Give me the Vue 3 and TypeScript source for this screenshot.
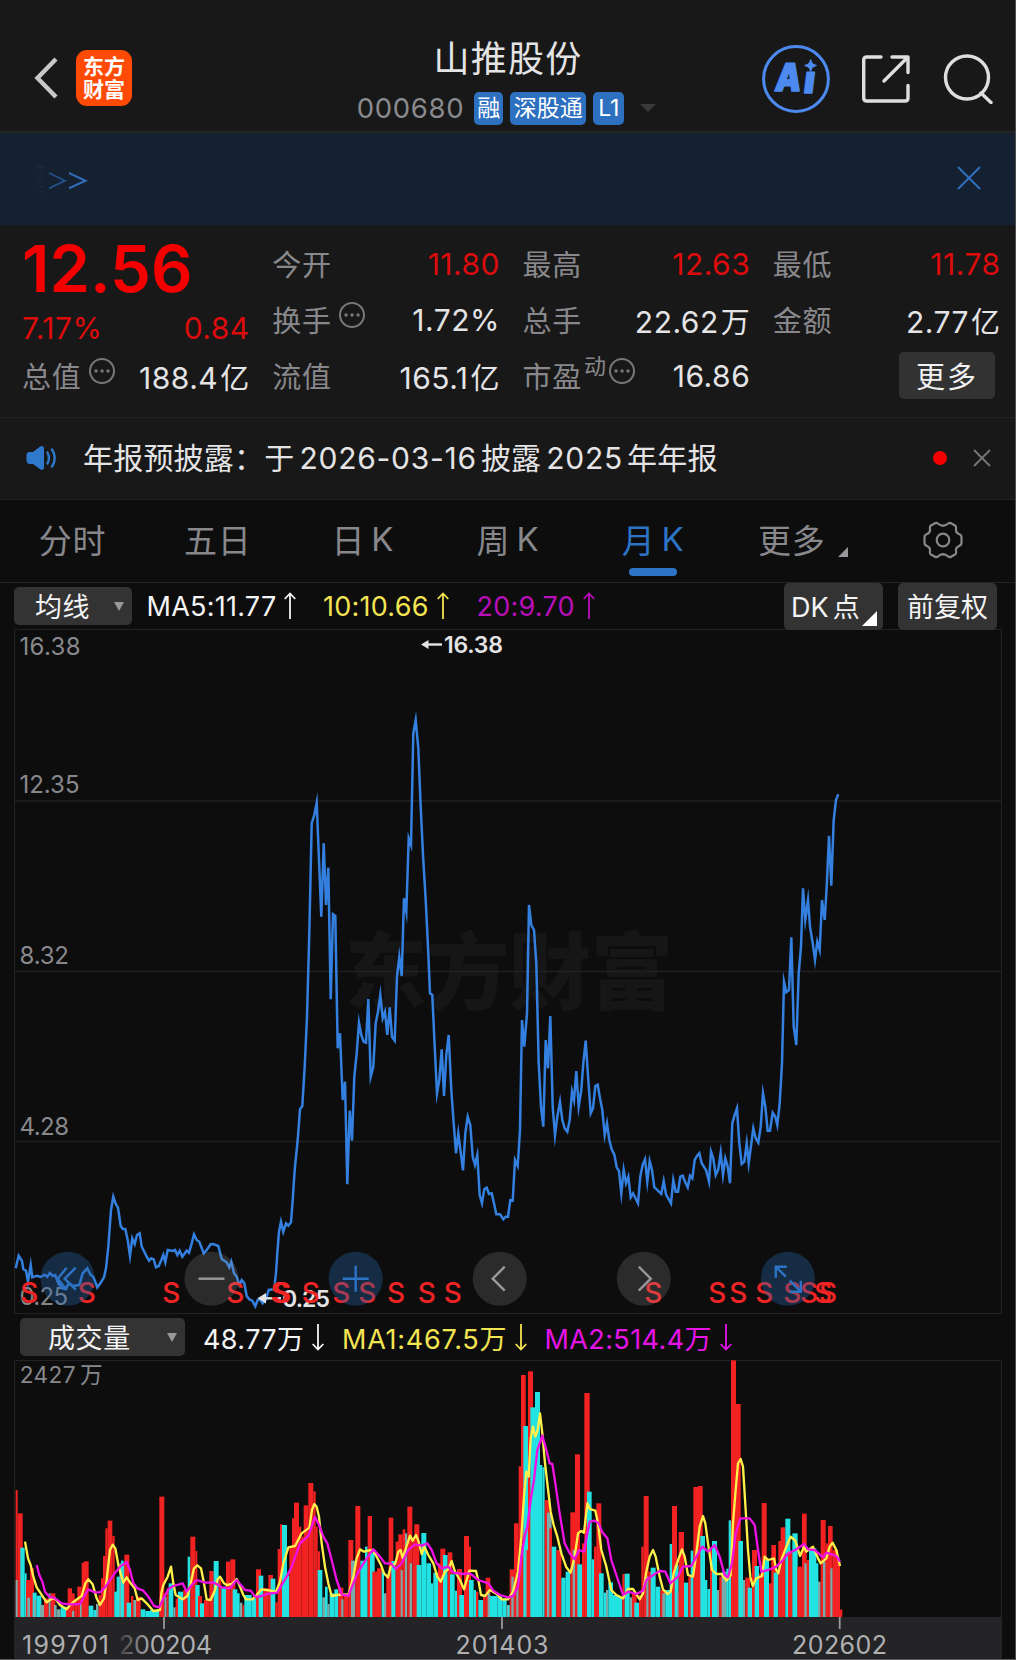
<script setup lang="ts">
type Kind = 'r' | 'c' | 'm'
interface Bar { x: number; w: number; y: number; kind: Kind }

const tabs = ['分时', '五日', '日K', '周K', '月K', '更多']
const activeTab = '月K'

const gridLines = [801, 971.5, 1141.5]
const priceLabels = [
  { text: '16.38', x: 19.5, y: 655.3, w: 61 },
  { text: '12.35', x: 19.5, y: 793, w: 60 },
  { text: '8.32', x: 19.5, y: 964, w: 49.5 },
  { text: '4.28', x: 19.5, y: 1134.5, w: 49.5 },
  { text: '0.25', x: 19.5, y: 1305.3, w: 48.5 },
]

const price =
  '15.7,1268.3 18.7,1255.7 22,1261 23.3,1269.3 26,1270.7 28,1281.7 30.7,1265 32.3,1277.3 36.7,1275.7 40.7,1277 44.7,1274.7 47.3,1276.7 50,1273 52.7,1276 55.3,1275 58.3,1283.3 62.3,1288.3 65.7,1289 68.7,1283.3 73.3,1286 79.3,1285 82.7,1273.3 87.3,1268.3 90.7,1275 93.3,1276.7 97.3,1287.3 100.7,1282.7 104,1277.3 106,1268.3 108.3,1246.7 111,1210 113.3,1196.7 115.7,1204 118,1207.7 120.7,1226 122.7,1229 125.3,1229 127.7,1240 130,1256 132.3,1238.3 134.7,1244 137,1235 139.7,1233.3 141.7,1246.7 144.3,1251.7 146.7,1256.7 149,1260.7 151.3,1258.3 153.7,1259.3 156,1267.3 158.7,1266 161.3,1260 163.3,1255 165.3,1262.3 167.7,1250 172.7,1251 175,1250 177.3,1255 179.7,1250.7 182.3,1256.7 186.7,1250.7 189,1252.7 191.7,1243.3 194,1234.3 196.7,1240 199.3,1241.7 203.7,1253.3 206.7,1250 210.7,1244.3 213.3,1244 218.3,1246 221.7,1259 226.7,1262.3 229.3,1267.3 231.3,1261.7 234,1273.3 236.7,1276.7 239.3,1285 241.7,1280 244.3,1283.3 246.7,1296 249.3,1299.3 252.3,1300.7 255.3,1306.3 257.7,1300 260,1299.3 262.7,1303.3 265.7,1300 268.7,1290 274,1289.3 276,1273.3 277.3,1253.3 279,1231.7 281,1221.7 283.3,1231.7 286,1223.3 288.3,1225.7 291,1222.3 292.7,1200 294,1180 ' +
  '295,1166.7 297.7,1140 300,1109.3 302.3,1106 304.7,1066.7 307,1016.7 309.3,933.3 311.7,823.3 314.3,815 316.7,802.7 319,860 321.3,916.7 323.7,843.3 326,905 328.3,867.7 330.7,999.3 333,914.3 335.3,916 337.7,1048.3 340,1033.3 342.7,1100 345,1081.7 347.3,1184.3 349.7,1110.7 352,1140.7 354.3,1076.7 356.7,1053.3 359,1022.7 361.3,1035 363.7,1041.7 366,1042.7 368.3,999 370.7,1076.7 373.3,1066.7 375.7,1023.3 378,1011.7 380.3,995 382.7,1018.3 385,1011.7 387.3,1035 389.7,1007.3 392,1036.7 394.7,1040.7 397,976.7 399.3,956.7 401.7,976 404,898.3 406.3,911.7 408.7,838.3 411,845 413.3,733.3 415.7,720 418.3,748.3 420.7,806.7 423,855 425.7,900 428,946.7 430,993.3 432.3,995 434.7,1046.7 437,1093.3 439.3,1080 441.7,1049.3 444,1096 446.3,1055 448.7,1035 451.3,1090 453.7,1123.3 456,1153.3 458.3,1133.3 463,1170.3 465.3,1133.3 467.7,1116.7 470.3,1125 472.7,1156.7 475,1165 477.3,1155 ' +
  '479.7,1195 482,1203.3 484.3,1189.3 486.7,1187.7 489,1194 491.7,1193.3 494,1203.3 496.3,1214.3 500,1214.3 503.3,1219.3 505.7,1216.7 508,1216.7 510.3,1200 512.7,1200.7 515,1160 517.7,1166 520,1130 522,1020 524.3,1046.7 527,1013.3 529,905 531.3,925 534,930 536.3,963.3 538.7,1063.3 541,1106.7 543.3,1126.7 545.7,1040 548,1068.3 550.3,1016 552.7,1106.7 555,1135.3 557.3,1116.7 560,1101.7 562.3,1120 564.7,1128.3 567.3,1131.7 569.7,1120 572,1091.7 574,1100 576.3,1071 578.7,1106.7 581.3,1090 583.3,1063.3 585.7,1040.7 588.3,1080 590.7,1113.3 593,1108.3 595.3,1086 597.7,1084.7 600,1098.3 602.3,1110 604.7,1135 607,1123.3 609.3,1140 611.7,1149.3 614.3,1154.3 616.7,1167.3 619,1171 621.3,1193.3 623.7,1170 626,1183.3 628.3,1176.7 630.7,1197.3 633,1193.3 638,1203.3 640.3,1176.7 642.7,1164.3 645,1159.3 647.3,1181.7 649.7,1161 652,1170 654.3,1187.3 656.7,1189.3 661.3,1194 663.7,1181 666,1194.3 671,1203.3 673.3,1180 675.7,1191.7 678,1191.7 680.3,1176.7 682.7,1175.7 685,1181.7 687.7,1187.3 690,1175.7 692.3,1178.3 694.7,1160 697,1156 699.3,1153.3 701.7,1163.3 706,1170 709,1181.7 711,1151.7 713.3,1158.3 715.7,1175 718.3,1169.3 720.7,1152.7 723,1175 725.3,1158.3 727.7,1166.7 730,1183.3 732.3,1123.3 734.7,1115 737,1108.3 739.3,1143.3 741.7,1164 744.3,1161.7 746.7,1143.3 748.7,1163.3 753.3,1128.3 755.7,1138.3 758.3,1142.7 760.7,1126.7 763,1093.3 765.3,1106.7 767.7,1130.7 770,1130.7 772.7,1112.7 775.3,1116.7 777.3,1125 779.7,1103.3 782,1063.3 784,981.7 786.3,992.3 789,990 791.3,937.3 793.7,1026.7 796.3,1045 798.7,973.3 801,946.7 803,888.3 805.3,920 808,900 810,926.7 812.7,943.3 815,960 817.3,941.7 819.7,950 822,900 824.7,920 826.7,886.7 829,835.7 831.3,885.7 833.7,820 836,800 838.3,794.3'

const sellMarks = [29.3, 86.7, 171.3, 235.3, 279.6, 282.2, 310.7, 341.3, 367.3, 396, 426.7, 452.7, 653.3, 717.3, 738.3, 764.3, 792.3, 809, 823, 828]

const controls = [
  { x: 67.7, tone: 'blue', path: 'M-1-11-10 0-1 11M8-11-3 0 8 11' },
  { x: 211.5, tone: 'gray', path: 'M-13 0H13' },
  { x: 355.7, tone: 'blue', path: 'M-13 0H13M0-13V13' },
  { x: 499.7, tone: 'gray', path: 'M5-12-7 0 5 12' },
  { x: 643.8, tone: 'gray', path: 'M-5-12 7 0-5 12' },
  { x: 787.8, tone: 'blue', path: 'M-12-1V-12H-1M-12-12-2-2M13 2V13H2M2 2 13 13' },
]

// Volume data uses a 3:1 plot grid; every entry is kind, left, right, top.
const early =
  'r47,53,420 m47,54,690 r53,68,490 c61,74,593 c74,80,670 r78,90,690 m82,90,743 r90,102,655 c98,110,728 m102,108,750 c110,124,737 m120,132,765 r132,146,745 m146,152,730 r152,166,730 m162,170,765 m170,182,778 c182,200,770 r198,206,780 r203,216,715 r216,224,730 m216,223,783 r224,232,750 r232,245,710 m240,246,760 r245,254,638 r252,266,634 c266,280,767 c280,290,780 m288,296,762 r296,303,735 r303,310,685 r309,317,618 r316,323,535 r323,337,512 r337,344,558 c343,352,725 c350,360,680 m358,374,640 c363,371,632 r373,388,614 c380,393,758 r393,400,738 m400,408,750 r408,422,740 c422,436,778 c436,450,783 c450,478,780 r478,493,440 m493,500,740 r500,506,715 c506,520,700 m520,527,772 r527,535,745 c534,550,725 r550,563,720 c563,571,620 r571,586,560 r586,592,603 c586,599,705 r594,606,738 c600,612,760 r612,628,750 r628,641,663 c641,656,633 r656,664,690 c664,678,710 r678,691,635 r691,706,628 c698,712,718 c706,719,730 m719,727,758 r727,733,765 c733,755,735 c755,770,745 r768,783,658 c776,790,677 r790,805,715 r805,819,675 c812,826,686 r826,833,757 r833,846,597 r840,848,523 c846,861,525 c861,868,677 r868,878,590 r876,890,505 r882,897,458 r897,904,530 r904,918,560 r911,925,466 r925,940,399 r940,947,424 r946,953,530 r953,960,604 c953,967,660 m967,975,742 c975,983,710 m982,989,762 c989,1003,730 c1003,1015,718 r1015,1030,713 m1024,1031,748 r1031,1045,738 r1045,1060,570 m1053,1066,632 r1066,1081,468 c1081,1095,632 c1095,1103,590 r1103,1116,498 c1110,1124,608 r1117,1131,665 r1131,1145,655 c1145,1152,660 m1152,1160,730 r1159,1167,680 r1166,1180,503 c1174,1187,633 r1187,1200,575 r1195,1208,553 m1202,1210,660 r1208,1216,538 m1215,1222,550 r1222,1237,470 m1229,1236,640 r1237,1250,570 r1243,1258,523 c1250,1264,645 c1264,1279,549 c1279,1293,640 c1293,1300,700 c1300,1314,668 r1314,1330,640 r1321,1336,596 c1329,1343,615 r1343,1357,607 c1350,1364,673 c1364,1371,722 r1371,1386,657 c1378,1392,735 r1392,1407,558 r1407,1413,590 c1407,1421,690 c1421,1428,720 r1428,1435,725 c1435,1449,750 r1449,1457,740 r1457,1471,683 m1463,1470,730 c1470,1492,738 c1492,1507,740 c1507,1520,747 m1520,1531,765'
const late =
  'c0,7,765 r5,19,658 m10,17,680 r18,32,520 m25,32,710 r32,40,349 r39,53,75 c46,60,228 m53,58,600 r56,62,600 r60,75,64 c67,82,172 c81,96,126 c96,103,345 c103,110,352 r110,124,450 m117,131,488 r124,132,535 c131,145,590 r145,160,600 c160,173,683 c173,187,665 r187,202,487 m194,202,600 r201,216,313 c208,222,643 r222,230,580 r229,245,129 c237,251,425 c251,258,628 r258,266,590 r265,280,460 c273,287,670 c287,294,728 m294,301,720 c301,315,697 c315,330,735 c328,343,740 r343,350,672 c350,365,671 m365,372,742 r372,386,728 c379,393,758 r393,400,735 r400,407,590 r407,422,438 m415,422,680 r422,430,665 c428,443,653 c443,457,710 r457,471,720 m463,472,730 c472,486,720 c485,493,582 r492,507,468 c500,512,645 m507,512,728 r512,528,546 c528,541,698 r541,549,680 c548,557,602 r556,570,411 r570,584,408 c577,591,558 c591,598,690 c598,606,717 r606,613,600 c612,627,573 m627,634,720 r634,648,680 m641,656,665 c655,662,656 c662,670,511 r669,684,31 r684,698,162 c691,705,573 m705,712,690 r712,726,683 c719,732,713 r732,747,600 c740,753,648 r753,762,670 r761,776,459 c768,783,630 r783,797,700 r790,804,585 c797,811,668 r811,820,573 r818,832,532 c832,847,506 r840,854,605 c853,869,550 r868,882,650 r882,896,491 m889,897,640 r896,904,630 c903,925,595 c924,931,640 m930,938,695 r938,953,510 m945,953,635 r953,968,580 r960,974,528 m967,974,655 r974,990,600 r990,996,630 r996,1003,779'

const SPLIT = 1524
const FLOOR = 801

function parseBars(src: string, dx: number): Bar[] {
  return src.split(' ').map((s) => {
    const [a, b, y] = s.slice(1).split(',').map(Number)
    return { x: a + dx, w: b - a, y, kind: s[0] as Kind }
  })
}
function join(first: string, second: string): string {
  const moved = second.split(' ').map((p) => {
    const [x, y] = p.split(',').map(Number)
    return `${x + SPLIT},${y}`
  })
  return `${first} ${moved.join(' ')}`
}

const bars: Bar[] = [...parseBars(early, 0), ...parseBars(late, SPLIT)]

const ma1 = join(
  '75,575 84,625 92,645 100,680 110,712 122,730 140,757 152,748 165,745 180,765 200,778 215,760 228,750 245,738 256,700 265,688 278,703 290,745 300,765 312,745 320,690 330,600 338,584 346,595 356,650 370,698 380,682 392,700 404,715 413,750 425,745 440,760 460,783 480,780 484,730 490,705 503,680 513,650 520,700 527,735 548,748 562,738 572,700 582,655 592,646 603,655 612,700 620,748 632,750 645,720 652,690 660,680 672,700 680,705 695,702 710,687 718,705 730,735 738,748 757,748 770,735 785,718 800,720 828,725 840,695 850,640 865,592 885,588 905,550 928,533 936,480 943,462 950,470 957,500 965,580 975,650 985,700 995,738 1010,735 1035,733 1045,735 1060,680 1070,625 1080,598 1092,605 1103,602 1118,600 1130,620 1143,645 1152,670 1164,682 1172,650 1186,640 1195,605 1202,600 1208,625 1216,600 1230,557 1238,572 1248,555 1256,575 1265,612 1273,590 1285,615 1300,640 1312,680 1322,695 1335,665 1345,658 1355,633 1365,665 1380,690 1392,718 1400,690 1408,662 1428,663 1436,695 1443,735 1455,738 1470,720 1490,732 1505,748',
  '0,748 15,725 30,665 40,560 48,440 55,365 62,380 68,265 75,230 82,260 89,240 96,190 103,250 110,330 118,400 128,485 137,525 148,560 160,610 175,652 188,668 200,620 210,550 220,543 228,548 238,460 246,477 262,482 270,520 280,600 295,650 310,720 325,735 345,745 360,717 375,717 395,748 405,730 415,665 425,620 435,600 443,620 455,680 465,718 478,732 488,725 497,670 512,625 522,598 530,620 540,675 555,680 565,610 575,530 585,498 592,520 600,580 612,660 625,672 640,672 656,692 668,675 675,520 683,420 690,340 698,327 705,350 713,480 720,600 727,680 734,708 745,685 762,678 770,620 780,630 798,625 805,660 811,670 820,630 835,590 848,560 862,572 876,618 888,590 895,605 915,590 930,625 938,640 955,625 965,590 974,578 985,600 996,648',
)
const ma2 = join(
  '110,645 118,675 127,695 135,725 148,740 165,745 185,760 205,763 240,762 255,735 265,718 285,727 300,727 315,712 330,690 348,665 360,650 380,636 390,660 400,700 412,715 430,722 445,740 462,768 478,772 490,745 505,718 520,708 548,700 560,725 575,705 590,690 615,698 640,697 665,712 690,715 710,690 735,720 752,722 765,740 780,740 800,732 832,728 845,705 860,680 875,650 900,580 925,558 935,530 945,500 957,525 970,560 982,580 995,630 1010,690 1025,733 1045,738 1058,705 1075,665 1100,625 1120,598 1140,620 1155,640 1172,640 1187,657 1205,640 1225,600 1245,583 1265,587 1282,580 1295,600 1310,640 1325,655 1345,650 1360,668 1385,672 1410,670 1435,690 1465,700 1480,722 1500,735',
  '0,742 15,738 30,710 40,620 50,560 58,530 68,450 78,390 88,300 103,257 115,300 125,340 133,342 142,400 155,490 170,580 185,610 200,628 213,600 228,605 238,550 245,515 260,512 272,520 282,545 298,565 310,630 325,675 345,735 360,725 385,732 405,722 415,690 440,672 455,663 472,665 487,700 510,680 525,650 550,648 565,620 583,590 600,605 620,585 635,620 650,675 660,682 672,640 683,550 697,505 725,505 740,525 750,600 760,665 780,660 805,650 825,630 838,612 862,600 888,582 900,598 920,600 945,622 955,608 985,618 996,635',
)

const ticks = [164, 502, 839.7]
</script>

<template>
  <div class="app">
    <header class="head">
      <div class="brand">
        <svg class="back" width="24" height="42" viewBox="0 0 24 42"><path d="M22 2 3.500 21 22 40" /></svg>
        <div class="logo"><span>东方</span><span>财富</span></div>
      </div>
      <div class="title">
        <h1>山推股份</h1>
        <div class="sub">
          <span class="code">000680</span>
          <span class="tag">融</span><span class="tag wide">深股通</span><span class="tag lv">L1</span>
          <i class="caret"></i>
        </div>
      </div>
      <div class="actions">
        <svg width="68" height="68" viewBox="0 0 68 68">
          <circle cx="34" cy="34" r="32.4" fill="none" stroke="#4d8af0" stroke-width="3" />
          <g transform="translate(13 45.5) skewX(-7)" class="ai">
            <text x="-1" y="0" textLength="26" lengthAdjust="spacingAndGlyphs">A</text>
            <text x="28" y="2" textLength="11" lengthAdjust="spacingAndGlyphs">ı</text>
          </g>
          <path d="M48.700 14.500C50 18.500 50.500 19 54.500 20.500 50.500 22 50 22.500 48.700 26.500 47.300 22.500 46.700 22 42.700 20.500 46.700 19 47.300 18.500 48.700 14.500Z" fill="#4d8af0" stroke="#4d8af0" />
        </svg>
        <svg width="48" height="48" viewBox="0 0 48 48" class="line">
          <path d="M19 2H5Q1.700 2 1.700 5V43Q1.700 46 5 46H43Q46 46 46 43V30.500M30 2H46V17.500M45.500 2.500 22 26" />
        </svg>
        <svg width="50" height="50" viewBox="0 0 50 50" class="line">
          <circle cx="24" cy="23.500" r="21.500" /><path d="M38 39 48 48.500" />
        </svg>
      </div>
    </header>

    <div class="banner">
      <svg width="56" height="30" viewBox="0 0 56 30">
        <path d="M3 3h7M4 9h5M3 15h6M5 22h5M4 28h6" stroke="#1b3048" stroke-width="1.200" />
        <path d="M15 9 31 16.700 15 24.300" stroke="#234f86" stroke-width="1.900" />
        <path d="M35 9 51.500 16.700 35 24.300" stroke="#316bb5" stroke-width="2.100" />
      </svg>
      <svg class="shut" width="24" height="24" viewBox="0 0 24 24"><path d="M1 1 23 23M23 1 1 23" stroke="#2e70be" stroke-width="2" /></svg>
    </div>

    <section class="stats">
      <div class="col lead">
        <div class="now">12.56</div>
        <div class="cell red"><b>7.17%</b><b>0.84</b></div>
        <div class="cell">
          <label>总值<svg class="dots" viewBox="0 0 26 26"><circle cx="13" cy="13" r="12" /><path d="M7 13h.1M13 13h.1M19 13h.1" /></svg></label>
          <b>188.4<em>亿</em></b>
        </div>
      </div>
      <div class="col">
        <div class="cell"><label>今开</label><b class="red">11.80</b></div>
        <div class="cell">
          <label>换手<svg class="dots" viewBox="0 0 26 26"><circle cx="13" cy="13" r="12" /><path d="M7 13h.1M13 13h.1M19 13h.1" /></svg></label>
          <b>1.72%</b>
        </div>
        <div class="cell"><label>流值</label><b>165.1<em>亿</em></b></div>
      </div>
      <div class="col">
        <div class="cell"><label>最高</label><b class="red">12.63</b></div>
        <div class="cell"><label>总手</label><b>22.62<em>万</em></b></div>
        <div class="cell">
          <label>市盈<sup>动</sup><svg class="dots near" viewBox="0 0 26 26"><circle cx="13" cy="13" r="12" /><path d="M7 13h.1M13 13h.1M19 13h.1" /></svg></label>
          <b>16.86</b>
        </div>
      </div>
      <div class="col">
        <div class="cell"><label>最低</label><b class="red">11.78</b></div>
        <div class="cell"><label>金额</label><b>2.77<em>亿</em></b></div>
        <div class="cell end"><button class="more">更多</button></div>
      </div>
    </section>

    <div class="notice">
      <svg width="32" height="26" viewBox="0 0 32 26">
        <path d="M2.500 7H7L14.500 1.200Q18 0 18 3.500V22.500Q18 26 14.500 24.500L7 19H4Q.5 19 .5 15V10Q.5 7 3.500 7Z" fill="#2f78cc" />
        <path d="M21.500 7.500Q24.500 13 21.500 18.500M26 4.500Q31.500 13 26 21.500" fill="none" stroke="#2f78cc" stroke-width="2.400" stroke-linecap="round" />
      </svg>
      <p>年报预披露：于<i>2026-03-16</i>披露<i>2025</i>年年报</p>
      <span class="unread"></span>
      <svg width="18" height="18" viewBox="0 0 18 18"><path d="M1 1 17 17M17 1 1 17" stroke="#77777b" stroke-width="1.800" /></svg>
    </div>

    <nav class="tabs">
      <div v-for="t in tabs" :key="t" class="tab" :class="{ on: t === activeTab, menu: t === '更多' }">
        <span>{{ t.replace('K', '') }}</span><i v-if="t.includes('K')">K</i>
        <svg v-if="t === '更多'" class="corner" width="10" height="10" viewBox="0 0 10 10"><path d="M10 0V10H0Z" fill="#98989c" /></svg>
      </div>
      <div class="tab">
        <svg width="40" height="38" viewBox="-20 -19 40 38" class="gear">
          <path d="M-4.500 -16 Q-6.500 -18-8.500 -16.500L-12 -14.500Q-13.500 -13.500-13 -11Q-12.500 -7.500-16 -6Q-18.500 -5-18.500 -3V3Q-18.500 5-16 6Q-12.500 7.500-13 11Q-13.500 13.500-12 14.500L-8.500 16.500Q-6.500 18-4.500 16Q0 12.500 4.500 16Q6.500 18 8.500 16.500L12 14.500Q13.500 13.500 13 11Q12.500 7.500 16 6Q18.500 5 18.500 3V-3Q18.500 -5 16 -6Q12.500 -7.500 13 -11Q13.500 -13.500 12 -14.500L8.500 -16.500Q6.500 -18 4.500 -16Q0 -12.500-4.500 -16Z" />
          <circle r="6.300" />
        </svg>
      </div>
    </nav>

    <div class="bar main">
      <button class="pick"><span>均线</span><i></i></button>
      <span class="val v1">MA5:11.77<svg viewBox="0 0 12 28"><path d="M6 27V1.500M.7 7 6 1.500 11.300 7" /></svg></span>
      <span class="val v2 yellow">10:10.66<svg viewBox="0 0 12 28"><path d="M6 27V1.500M.7 7 6 1.500 11.300 7" /></svg></span>
      <span class="val v3 plum">20:9.70<svg viewBox="0 0 12 28"><path d="M6 27V1.500M.7 7 6 1.500 11.300 7" /></svg></span>
      <button class="box dk">DK<em>点</em><svg class="mark" viewBox="0 0 15 15"><path d="M15 0V15H0Z" fill="#fff" /></svg></button>
      <button class="box">前复权</button>
    </div>

    <svg class="plot" width="1016" height="685" viewBox="0 629 1016 685">
      <rect x="14.500" y="629.500" width="987" height="684" fill="none" stroke="#232324" />
      <text class="ghost" x="345" y="1003" textLength="328" lengthAdjust="spacingAndGlyphs">东方财富</text>
      <path v-for="y in gridLines" :key="y" :d="`M15 ${y}H1001`" stroke="#202021" stroke-width="1.600" />
      <text v-for="l in priceLabels" :key="l.text" class="scale" :x="l.x" :y="l.y" :textLength="l.w">{{ l.text }}</text>
      <polyline class="price" :points="price" />
      <g class="peak">
        <path d="M427 644.500H442" /><path d="M421 644.500 428.500 640V649Z" class="tip" />
        <text x="444" y="652.500" textLength="59">16.38</text>
        <path d="M265 1298.300H281" /><path d="M257.500 1298.300 266 1293V1303.600Z" class="tip" />
        <text x="282" y="1306.800" textLength="48">0.25</text>
      </g>
      <text v-for="x in sellMarks" :key="x" class="sell" :x="x" y="1302.700">S</text>
      <g v-for="c in controls" :key="c.x" :class="['ctl', c.tone]" :transform="`translate(${c.x} 1278.700)`">
        <circle r="27" /><path :d="c.path" />
      </g>
    </svg>

    <div class="bar volume">
      <button class="pick"><span>成交量</span><i></i></button>
      <span class="val w1">48.77万<svg viewBox="0 0 12 28"><path d="M6 1V26.500M.7 21 6 26.500 11.300 21" /></svg></span>
      <span class="val w2 yellow">MA1:467.5万<svg viewBox="0 0 12 28"><path d="M6 1V26.500M.7 21 6 26.500 11.300 21" /></svg></span>
      <span class="val w3 pink">MA2:514.4万<svg viewBox="0 0 12 28"><path d="M6 1V26.500M.7 21 6 26.500 11.300 21" /></svg></span>
    </div>

    <svg class="plot" width="1016" height="257" viewBox="0 30 3048 771">
      <path d="M43.500 801V31.500H3004.500V801" fill="none" stroke="#232324" stroke-width="3" />
      <text class="scale big" x="59" y="99" textLength="168">2427</text>
      <text class="scale big" x="240" y="99">万</text>
      <rect v-for="(b, i) in bars" :key="i" :class="b.kind" :x="b.x" :y="b.y" :width="b.w" :height="FLOOR - b.y" />
      <polyline class="ma yellow" :points="ma1" />
      <polyline class="ma pink" :points="ma2" />
    </svg>

    <svg class="plot" width="1016" height="43" viewBox="0 1617 1016 43">
      <defs>
        <linearGradient id="fade" gradientUnits="userSpaceOnUse" x1="112" y1="0" x2="152" y2="0">
          <stop offset="0" stop-color="#b0b0b3" stop-opacity=".03" /><stop offset="1" stop-color="#b0b0b3" />
        </linearGradient>
      </defs>
      <rect x="14" y="1617" width="988" height="43" fill="#242426" />
      <path v-for="x in ticks" :key="x" :d="`M${x} 1617V1629`" stroke="#9a9a9d" stroke-width="1.800" />
      <g class="dates">
        <text x="22" y="1654" textLength="87">199701</text>
        <text x="119" y="1654" textLength="93" fill="url(#fade)">200204</text>
        <text x="455.500" y="1654" textLength="93">201403</text>
        <text x="792" y="1654" textLength="95">202602</text>
      </g>
      <path d="M0 1659.500H1016" stroke="#5a5a5c" />
    </svg>
  </div>
</template>

<style>
body { background: #0d0d0d; }
</style>

<style scoped>
.app {
  position: relative;
  width: 1016px;
  height: 1660px;
  overflow: hidden;
  background: #0d0d0d;
  color: #e4e4e6;
  font-family: Inter, "Noto Sans CJK SC", sans-serif;
  display: flex;
  flex-direction: column;
}
.app::after { content: ""; position: absolute; top: 0; right: 0; width: 1px; height: 100%; background: #4c4c4e; }
.app > * { flex: none; }
button { border: 0; font: inherit; color: inherit; padding: 0; }
i, em { font-style: normal; }
b { font-weight: 400; }

.head {
  height: 131px;
  border-bottom: 2px solid #262628;
  background: #181818;
  display: grid;
  grid-template-columns: 340px 336px 340px;
}
.brand { display: flex; align-items: center; padding: 25px 0 0 34px; gap: 18px; }
.back path { fill: none; stroke: #c8c8ca; stroke-width: 4.4; }
.logo {
  width: 56px;
  height: 56px;
  border-radius: 11px;
  background: #ff4a05;
  color: #fff;
  display: flex;
  flex-direction: column;
  justify-content: center;
  align-items: center;
  font-weight: 700;
  font-size: 21px;
  line-height: 23px;
}
.title { display: flex; flex-direction: column; align-items: center; padding-top: 38px; }
h1 { margin: 0; font-weight: 400; font-size: 36px; line-height: 42px; letter-spacing: 1.3px; }
.sub { display: flex; align-items: center; margin-top: 11px; height: 34px; }
.code { font-size: 27.5px; color: #8b8b8f; letter-spacing: .7px; margin: 0 10px 0 -3px; }
.tag {
  height: 33px;
  line-height: 33px;
  background: #2d70c0;
  color: #fff;
  border-radius: 5px;
  font-size: 23px;
  width: 29px;
  text-align: center;
  margin-right: 7px;
}
.tag.wide { width: 76px; }
.tag.lv { width: 31px; margin-right: 16px; }
.caret { border: 8px solid transparent; border-top-color: #3a3a3c; border-bottom: 0; }
.actions { display: flex; align-items: center; padding: 26px 0 0 86px; }
.actions svg:nth-child(2) { margin-left: 32px; }
.actions svg:nth-child(3) { margin-left: 33px; }
.line { fill: none; stroke: #dededf; stroke-width: 3.4; stroke-linecap: round; stroke-linejoin: round; }
.ai { font-weight: 900; font-size: 38px; fill: #4d8af0; stroke: #4d8af0; stroke-width: 1.5; stroke-linejoin: round; }

.banner {
  height: 92px;
  background: #152130;
  display: flex;
  align-items: center;
  justify-content: space-between;
  padding: 0 35px 0 34px;
  box-sizing: border-box;
}
.banner svg { fill: none; }
.shut { margin-top: -2px; }

.stats {
  height: 192px;
  box-sizing: border-box;
  padding: 12px 16px 0 22px;
  background: #181818;
  display: grid;
  grid-template-columns: repeat(4, 1fr);
  column-gap: 23px;
}
.col { display: grid; grid-template-rows: repeat(3, 56px); }
.lead { grid-template-rows: 62px 60px 36px; }
.now { color: #f40000; font-weight: 600; font-size: 65px; line-height: 63px; }
.cell { display: flex; align-items: center; justify-content: space-between; font-size: 29px; }
.cell label { color: #88888c; display: flex; align-items: center; letter-spacing: .8px; margin-top: -4px; }
.cell b { font-size: 30px; letter-spacing: .5px; margin-right: -.5px; margin-top: -2px; }
.cell.red, .red { color: #dd0c0c; }
.cell em { margin-left: 2px; font-size: 29px; }
.cell sup { font-size: 22px; line-height: 22px; margin: -18px 0 0 2px; }
.dots { width: 26px; height: 26px; margin: -9px 0 0 7px; fill: none; stroke: #77777b; stroke-width: 2; }
.dots path { stroke-width: 3.4; stroke-linecap: round; }
.dots.near { margin-left: 2px; }
.end { justify-content: flex-end; }
.more { width: 96px; height: 47px; margin-right: 5px; margin-top: -3px; padding-bottom: 2px; border-radius: 5px; background: #323233; color: #f2f2f3; letter-spacing: 2px; }

.notice {
  height: 83px;
  box-sizing: border-box;
  background: #181818;
  border-top: 1px solid #222223;
  border-bottom: 1px solid #222223;
  display: flex;
  align-items: center;
  padding: 0 25px 2px 26px;
}
.notice p { margin: -4px auto 0 25px; font-size: 30px; letter-spacing: .2px; }
.notice p i { margin: 0 4px 0 5px; font-size: 30px; letter-spacing: .75px; }
.unread { width: 14px; height: 14px; border-radius: 50%; background: #f40000; margin-right: 26px; }

.tabs {
  height: 83px;
  box-sizing: border-box;
  border-bottom: 1px solid #232324;
  display: grid;
  grid-template-columns: repeat(7, 1fr);
}
.tab { position: relative; display: flex; align-items: center; justify-content: center; color: #88888c; font-size: 33px; letter-spacing: .8px; padding-bottom: 4px; }
.tab i { margin-left: 6px; }
.tab.menu { padding-left: 9px; }
.tab.on { color: #2d73c6; }
.tab.on::after { content: ""; position: absolute; left: 50%; bottom: 6px; width: 48px; height: 8px; margin-left: -24px; border-radius: 4px; background: #2d73c6; }
.corner { margin: 26px 0 0 12px; }
.gear { fill: none; stroke: #88888c; stroke-width: 2.2; margin-top: 2px; }

.bar { display: flex; align-items: center; font-size: 27px; color: #f4f4f5; }
.bar.main { height: 46px; padding: 0 19px 0 14px; }
.bar.volume { height: 46px; padding: 0 19px 0 20px; box-sizing: border-box; }
.pick { background: #333334; border-radius: 5px; height: 38px; display: flex; align-items: center; justify-content: space-between; padding: 0 8px 0 21px; width: 118px; box-sizing: border-box; }
.pick span { letter-spacing: .6px; margin-top: -2px; }
.pick i { border: 5px solid transparent; border-top: 9px solid #98989c; border-bottom: 0; }
.volume .pick { width: 165px; padding-left: 28px; }
.val { display: flex; align-items: center; white-space: nowrap; letter-spacing: .25px; }
.val svg { width: 12px; height: 28px; margin-left: 8px; fill: none; stroke: currentColor; stroke-width: 1.8; }
.v1 { width: 176.5px; margin-left: 14.5px; }
.v2 { width: 153.5px; }
.v3 { margin-right: auto; }
.w1 { width: 139px; margin-left: 18px; }
.w1, .w3 { letter-spacing: .4px; }
.w2 { width: 202.5px; letter-spacing: .75px; }
.val.yellow { color: #f3e452; }
.val.plum { color: #b90fb9; }
.val.pink { color: #e714e7; }
.box { position: relative; height: 47px; width: 99px; padding-bottom: 1px; box-sizing: border-box; background: #333334; border-radius: 5px; }
.box.dk { margin-right: 15px; text-align: left; padding-left: 7px; }
.box em { margin-left: 4px; }
.mark { position: absolute; right: 6px; bottom: 4px; width: 15px; height: 15px; }

.plot { display: block; }
.scale { font-size: 24px; fill: #88888c; }
.scale.big { font-size: 68px; }
.ghost { font-size: 84px; font-weight: 900; fill: #161617; }
.price { fill: none; stroke: #3380e0; stroke-width: 2.5; stroke-linejoin: miter; stroke-miterlimit: 10; }
.peak text { font-size: 23px; font-weight: 600; fill: #e4e4e6; }
.peak path { stroke: #e4e4e6; stroke-width: 2.4; }
.peak .tip { fill: #e4e4e6; stroke: none; }
.sell { font-size: 28px; fill: #f02424; text-anchor: middle; font-weight: 500; }
.ctl path { fill: none; stroke-width: 2.4; }
.ctl.blue circle { fill: rgba(40, 100, 170, .36); }
.ctl.blue path { stroke: #2d73c6; }
.ctl.gray circle { fill: rgba(150, 150, 155, .22); }
.ctl.gray path { stroke: #98989c; }
.r { fill: #f22222; }
.c { fill: #22e2e2; }
.m { fill: #7aaaaa; }
.ma { fill: none; stroke-width: 7; stroke-linejoin: round; }
.ma.yellow { stroke: #fff04a; }
.ma.pink { stroke: #f012e4; }
.dates { font-size: 25px; fill: #b0b0b3; }
</style>
